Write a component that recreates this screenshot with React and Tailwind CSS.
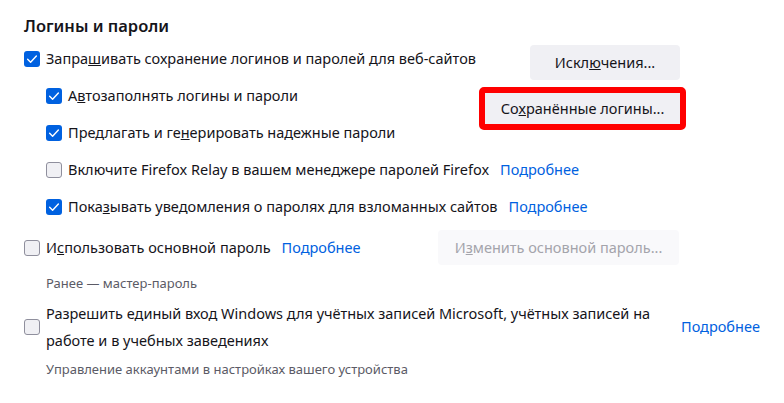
import React from "react";

function Checkbox({ checked }) {
  return checked ? (
    <span className="flex h-4 w-4 shrink-0 items-center justify-center rounded-[3px] bg-[#0061e0]">
      <svg width="14" height="14" viewBox="0 0 16 16" fill="none">
        <path d="M3 8.2 L6.4 11.6 L13 4.6" stroke="white" strokeWidth="1.6" strokeLinecap="round" strokeLinejoin="round" />
      </svg>
    </span>
  ) : (
    <span className="h-4 w-4 shrink-0 rounded-[3px] border border-[#8f8f9d] bg-[#f0f0f4]" />
  );
}

function Link({ children }) {
  return <span className="text-[#0061e0]">{children}</span>;
}

function Row({ checked, indent, children }) {
  return (
    <div className={`flex h-[37px] items-center gap-[6px] ${indent ? "pl-[22px]" : ""}`}>
      <Checkbox checked={checked} />
      <div className="flex items-center gap-[11px] whitespace-nowrap">{children}</div>
    </div>
  );
}

export default function App() {
  return (
    <div
      className="h-[403px] w-[784px] overflow-hidden bg-white pl-6 text-[14.5px] text-[#15141a]"
      style={{ fontFamily: "'Noto Sans', 'Open Sans', sans-serif" }}
    >
      {/* heading */}
      <h2 className="pt-[14px] text-[16.5px] font-semibold leading-6">Логины и пароли</h2>

      {/* top block: checkboxes + buttons */}
      <div className="mt-[2px] flex pr-[98px]">
        <div className="flex min-w-0 flex-1 flex-col">
          <Row checked>
            <span>
              Запра<u>ш</u>ивать сохранение логинов и паролей для веб-сайтов
            </span>
          </Row>
          <Row checked indent>
            <span>
              А<u>в</u>тозаполнять логины и пароли
            </span>
          </Row>
          <Row checked indent>
            <span>
              Предлагать и ге<u>н</u>ерировать надежные пароли
            </span>
          </Row>
          <Row indent>
            <span>Включите Firefox Relay в вашем менеджере паролей Firefox</span>
            <Link>Подробнее</Link>
          </Row>
          <Row checked indent>
            <span>
              Пока<u>з</u>ывать уведомления о паролях для взломанных сайтов
            </span>
            <Link>Подробнее</Link>
          </Row>
        </div>

        <div className="flex w-[207px] shrink-0 flex-col items-end pt-[5px]">
          <button className="mr-[6px] flex h-[35px] w-[150px] items-center justify-center rounded-[4px] bg-[#f0f0f4]">
            Искл<u>ю</u>чения...
          </button>
          <div className="mt-[7px] flex h-[43px] w-[207px] rounded-[5px] border-[6px] border-[#ff0000] bg-[#ff0000]">
            <button className="flex flex-1 items-center justify-center bg-[#f0f0f4]">
              Со<u>х</u>ранённые логины...
            </button>
          </div>
        </div>
      </div>

      {/* primary password */}
      <div className="mt-[5px] flex h-[35px] items-center pr-[105px]">
        <div className="flex items-center gap-[6px]">
          <Checkbox />
          <div className="flex items-center gap-[11px] whitespace-nowrap">
            <span>
              И<u>с</u>пользовать основной пароль
            </span>
            <Link>Подробнее</Link>
          </div>
        </div>
        <button className="ml-auto flex h-[35px] w-[241px] items-center justify-center rounded-[4px] bg-[#f9f9fb] text-[#a4a4ab]">
          И<u>з</u>менить основной пароль...
        </button>
      </div>
      <p className="mt-[8px] pl-[22px] text-[13px] leading-5 text-[#5b5b66]">Ранее — мастер-пароль</p>

      {/* windows SSO */}
      <div className="mt-[7px] flex items-center">
        <div className="flex min-w-0 flex-1 items-center gap-[6px]">
          <Checkbox />
          <p className="whitespace-nowrap leading-[27px]">
            Разрешить единый вход Windows для учётных записей Microsoft, учётных записей на
            <br />
            работе и в учебных заведениях
          </p>
        </div>
        <span className="w-[103px] shrink-0 text-[#0061e0]">Подробнее</span>
      </div>
      <p className="mt-[5px] pl-[22px] text-[13px] leading-5 text-[#5b5b66]">
        Управление аккаунтами в настройках вашего устройства
      </p>
    </div>
  );
}
